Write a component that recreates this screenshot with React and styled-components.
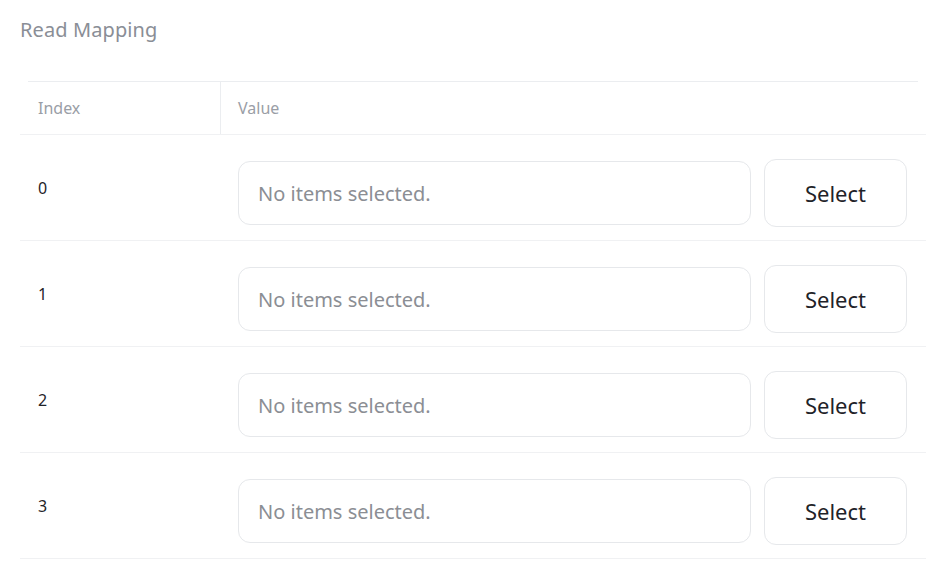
import React from 'react';
import styled, { createGlobalStyle } from 'styled-components';

const GlobalStyle = createGlobalStyle`
    body {
        margin: 0;
        background: #ffffff;
        font-family: "Noto Sans", "Noto Sans CJK KR", sans-serif;
    }
`

const Page = styled.div`
    width: 940px;
    padding: 14px 0 0 0;
    box-sizing: border-box;
`

const Title = styled.h2`
    margin: 0 0 0 20px;
    font-size: 20px;
    font-weight: 400;
    line-height: 32px;
    color: #8a8e96;
    letter-spacing: 0.1px;
`

const Table = styled.div`
    margin: 35px 14px 0 20px;
`

const HeaderWrap = styled.div`
    border-bottom: 1px solid #f0f1f3;
`

const HeaderRow = styled.div`
    display: grid;
    grid-template-columns: 192px 1fr;
    height: 52px;
    margin: 0 8px;
    border-top: 1px solid #ebedf0;
`

const HeaderCell = styled.div`
    display: flex;
    align-items: center;
    padding-left: ${props => props.pad};
    font-size: 16px;
    color: #9a9ea6;
    border-left: ${props => props.divider ? '1px solid #ebedf0' : 'none'};
`

const Row = styled.div`
    display: grid;
    grid-template-columns: 200px 1fr;
    border-bottom: 1px solid #f0f1f3;
`

const IndexCell = styled.div`
    display: flex;
    align-items: center;
    padding-left: 18px;
    font-size: 16px;
    color: #1f2329;
`

const ValueCell = styled.div`
    display: flex;
    align-items: center;
    gap: 13px;
    padding: 24px 19px 13px 18px;
`

const ValueBox = styled.div`
    flex: 1;
    height: 64px;
    box-sizing: border-box;
    display: flex;
    align-items: center;
    padding-left: 19px;
    border: 1px solid #e6e8eb;
    border-radius: 12px;
    font-size: 20px;
    color: #8b8e94;
`

const SelectButton = styled.button`
    width: 143px;
    height: 68px;
    box-sizing: border-box;
    border: 1px solid #e6e8eb;
    border-radius: 12px;
    background: #ffffff;
    font-family: inherit;
    font-size: 22px;
    color: #1f2329;
    cursor: pointer;
`

const rows = [0, 1, 2, 3];

const App = () => (
    <Page>
        <GlobalStyle />
        <Title>Read Mapping</Title>
        <Table>
            <HeaderWrap>
                <HeaderRow>
                    <HeaderCell pad="10px">Index</HeaderCell>
                    <HeaderCell pad="17px" divider>Value</HeaderCell>
                </HeaderRow>
            </HeaderWrap>
            {rows.map(i => (
                <Row key={i}>
                    <IndexCell>{i}</IndexCell>
                    <ValueCell>
                        <ValueBox>No items selected.</ValueBox>
                        <SelectButton>Select</SelectButton>
                    </ValueCell>
                </Row>
            ))}
        </Table>
    </Page>
);

export default App;
